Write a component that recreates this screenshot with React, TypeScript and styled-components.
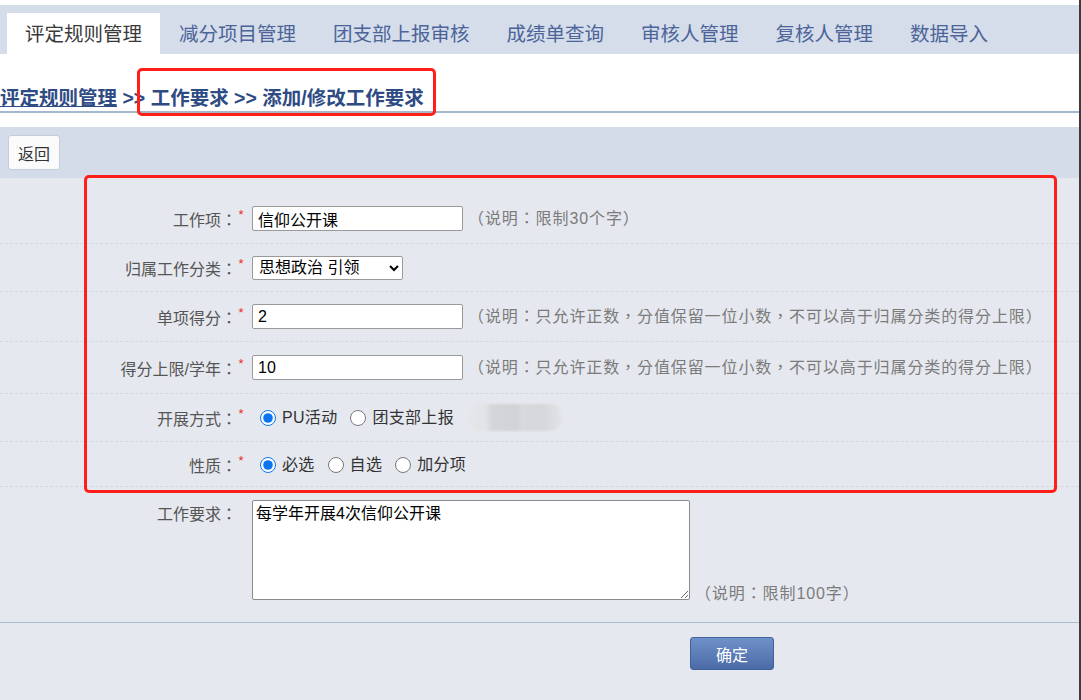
import React from 'react';
import styled, { createGlobalStyle } from 'styled-components';

const GlobalStyle = createGlobalStyle`
    html, body {
        margin: 0;
        padding: 0;
        background: #ffffff;
    }
    body {
        font-family: "Liberation Sans", "Noto Sans CJK SC", sans-serif;
    }
`;

const Page = styled.div`
    position: relative;
    width: 1079px;
    min-height: 700px;
    border-right: 2px solid #3b3b3b;
    background: #e5e8ee;
    overflow: hidden;
`;

const Header = styled.div`
    background: #ffffff;
    padding-top: 5px;
`;

const TabBar = styled.div`
    display: flex;
    align-items: flex-end;
    height: 49px;
    padding-left: 7px;
    background: #d4dde9;
`;

const Tab = styled.div<{ $active?: boolean }>`
    height: 41px;
    line-height: 43px;
    padding: 0 18px;
    margin-right: 1px;
    font-size: 19.5px;
    color: ${p => (p.$active ? '#3a3a3a' : '#4c6499')};
    background: ${p => (p.$active ? '#ffffff' : 'transparent')};
    white-space: nowrap;
`;

const Crumbs = styled.div`
    height: 59px;
    box-sizing: border-box;
    padding-top: 31px;
    line-height: 26px;
    font-size: 19.5px;
    font-weight: bold;
    color: #2e4b84;
    white-space: nowrap;
    border-bottom: 2px solid #a4b9cc;
`;

const CrumbLink = styled.a`
    color: #2e4b84;
    text-decoration: underline;
`;

const Gap = styled.div`
    height: 14px;
    background: #ffffff;
`;

const Toolbar = styled.div`
    height: 51px;
    box-sizing: border-box;
    padding: 8px 8px;
    background: #d3dce8;
`;

const BackButton = styled.button`
    height: 35px;
    width: 52px;
    padding: 0;
    font-family: inherit;
    font-size: 16px;
    color: #333;
    background: #fbfbfb;
    border: 1px solid #c4ccd8;
    border-radius: 3px;
`;

const Form = styled.div`
    padding-top: 16px;
    border-bottom: 1px solid #a6bbcc;
`;

const Row = styled.div<{ $top?: boolean; $pt?: number; $pb?: number }>`
    display: flex;
    align-items: ${p => (p.$top ? 'flex-start' : 'center')};
    padding: ${p => p.$pt ?? 12}px 0 ${p => p.$pb ?? 12}px;
    border-bottom: ${p => (p.$top ? 'none' : '1px dashed #d4d8df')};
`;

const Label = styled.div`
    display: flex;
    justify-content: flex-end;
    align-items: center;
    width: 245px;
    height: 25px;
    flex-shrink: 0;
    font-size: 16px;
    color: #555;
    white-space: nowrap;
`;

const Colon = styled.span`
    font-family: "Noto Sans CJK TC", sans-serif;
`;

const Required = styled.span`
    align-self: flex-start;
    width: 8px;
    padding-top: 2px;
    color: #ee2a2a;
    font-size: 13px;
    line-height: 14px;
    text-align: center;
`;

const Field = styled.div<{ $end?: boolean }>`
    display: flex;
    align-items: ${p => (p.$end ? 'flex-end' : 'center')};
    margin-left: 7px;
`;

const TextInput = styled.input`
    box-sizing: border-box;
    width: 211px;
    height: 25px;
    padding: 0 5px;
    font-family: inherit;
    font-size: 16px;
    color: #000;
    background: #fff;
    border: 1px solid #9a9a9a;
    border-radius: 2px;
`;

const Select = styled.select`
    box-sizing: border-box;
    width: 151px;
    height: 24px;
    padding: 0 2px;
    font-family: inherit;
    font-size: 16px;
    color: #000;
    background: #fff;
    border: 1px solid #9a9a9a;
    border-radius: 2px;
`;

const Note = styled.span<{ $drop?: number }>`
    margin-left: 5px;
    margin-bottom: ${p => -(p.$drop ?? 0)}px;
    font-family: "Liberation Sans", "Noto Sans CJK TC", sans-serif;
    font-size: 16px;
    line-height: 22px;
    color: #7b7b7b;
    letter-spacing: 0.9px;
    white-space: nowrap;
`;

const RadioGroup = styled.div`
    display: flex;
    align-items: center;
    height: 22px;
    padding-left: 8px;
`;

const RadioLabel = styled.label`
    display: flex;
    align-items: center;
    margin-right: 13px;
    font-size: 16px;
    color: #333;
    line-height: 22px;
    letter-spacing: 0.3px;
`;

const Radio = styled.input`
    width: 16px;
    height: 16px;
    margin: 0 6px 0 0;
    accent-color: #0b74f0;
`;

const Mosaic = styled.span`
    display: inline-block;
    width: 95px;
    height: 27px;
    border-radius: 13px;
    background: linear-gradient(to right, #e6e7ea 0%, #e2e3e6 20%, #d5d6d9 26%, #d2d3d6 52%, #d8d9dc 58%, #d6d7da 80%, #e2e3e6 100%);
    filter: blur(1px);
`;

const TextArea = styled.textarea`
    box-sizing: border-box;
    width: 438px;
    height: 100px;
    padding: 2px 3px;
    font-family: inherit;
    font-size: 16px;
    line-height: 22px;
    color: #000;
    background: #fff;
    border: 1px solid #8a8a8a;
    border-radius: 2px;
    resize: both;
`;

const Footer = styled.div`
    padding: 14px 0 0 690px;
    height: 62px;
`;

const SubmitButton = styled.button`
    width: 84px;
    height: 33px;
    padding: 0;
    font-family: inherit;
    font-size: 16px;
    color: #fff;
    background: linear-gradient(to bottom, #6f91c9, #4b6ba6);
    border: 1px solid #41619a;
    border-radius: 3px;
`;

const Highlight = styled.div`
    position: absolute;
    box-sizing: border-box;
    border: 3px solid #ff1f1a;
    border-radius: 5px;
    pointer-events: none;
`;

const tabs = ['评定规则管理', '减分项目管理', '团支部上报审核', '成绩单查询', '审核人管理', '复核人管理', '数据导入'];

const FieldLabel = ({ text, required = true }: { text: string; required?: boolean }) => (
    <Label>
        {text}<Colon>：</Colon>
        <Required>{required ? '*' : ''}</Required>
    </Label>
);

const scoreNote = '（说明：只允许正数，分值保留一位小数，不可以高于归属分类的得分上限）';

const App = () => {
    return (
        <Page>
            <GlobalStyle />
            <Header>
                <TabBar>
                    {tabs.map((t, i) => (
                        <Tab key={t} $active={i === 0}>{t}</Tab>
                    ))}
                </TabBar>
                <Crumbs>
                    <CrumbLink>评定规则管理</CrumbLink> &gt;&gt; 工作要求 &gt;&gt; 添加/修改工作要求
                </Crumbs>
            </Header>
            <Gap />
            <Toolbar>
                <BackButton>返回</BackButton>
            </Toolbar>
            <Form>
                <Row>
                    <FieldLabel text="工作项" />
                    <Field>
                        <TextInput defaultValue="信仰公开课" />
                        <Note>（说明：限制30个字）</Note>
                    </Field>
                </Row>
                <Row $pt={11} $pb={11}>
                    <FieldLabel text="归属工作分类" />
                    <Field>
                        <Select defaultValue="1">
                            <option value="1">思想政治 引领</option>
                        </Select>
                    </Field>
                </Row>
                <Row>
                    <FieldLabel text="单项得分" />
                    <Field>
                        <TextInput defaultValue="2" />
                        <Note>{scoreNote}</Note>
                    </Field>
                </Row>
                <Row $pt={13} $pb={13}>
                    <FieldLabel text="得分上限/学年" />
                    <Field>
                        <TextInput defaultValue="10" />
                        <Note>{scoreNote}</Note>
                    </Field>
                </Row>
                <Row $pt={11} $pb={11}>
                    <FieldLabel text="开展方式" />
                    <Field>
                        <RadioGroup>
                            <RadioLabel><Radio type="radio" name="mode" defaultChecked />PU活动</RadioLabel>
                            <RadioLabel><Radio type="radio" name="mode" />团支部上报</RadioLabel>
                            <Mosaic />
                        </RadioGroup>
                    </Field>
                </Row>
                <Row $pt={10} $pb={9}>
                    <FieldLabel text="性质" />
                    <Field>
                        <RadioGroup>
                            <RadioLabel><Radio type="radio" name="kind" defaultChecked />必选</RadioLabel>
                            <RadioLabel><Radio type="radio" name="kind" />自选</RadioLabel>
                            <RadioLabel><Radio type="radio" name="kind" />加分项</RadioLabel>
                        </RadioGroup>
                    </Field>
                </Row>
                <Row $top $pt={13} $pb={22}>
                    <FieldLabel text="工作要求" required={false} />
                    <Field $end>
                        <TextArea defaultValue="每学年开展4次信仰公开课" />
                        <Note $drop={5}>（说明：限制100字）</Note>
                    </Field>
                </Row>
            </Form>
            <Footer>
                <SubmitButton>确定</SubmitButton>
            </Footer>
            <Highlight style={{ left: 137, top: 68, width: 299, height: 48 }} />
            <Highlight style={{ left: 84, top: 175, width: 973, height: 318 }} />
        </Page>
    );
};

export default App;
